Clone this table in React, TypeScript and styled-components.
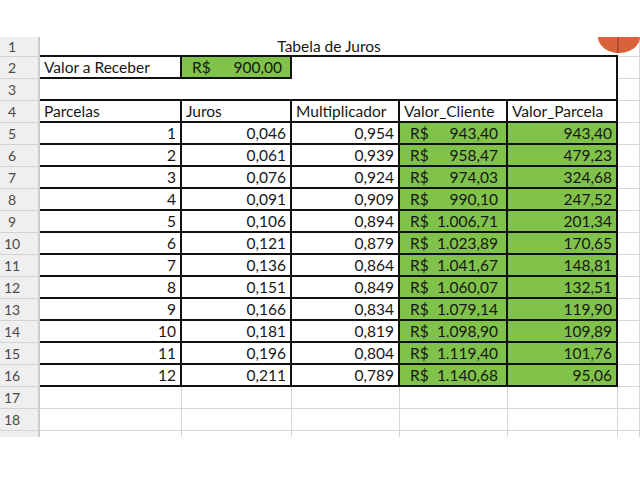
import React from "react";
import styled, { createGlobalStyle } from "styled-components";

const GlobalStyle = createGlobalStyle`
  html, body { margin: 0; padding: 0; background: #ffffff; }
  body { font-family: Lato, "Open Sans", "Liberation Sans", sans-serif; }
`;

type Line = "black" | "gray" | "none";

const lineCss = (l: Line | undefined) =>
  l === "black" ? "2px solid #111" : l === "none" ? "0 solid transparent" : "1px solid #d6d6d6";

const Page = styled.div`
  position: relative;
  width: 640px;
  height: 480px;
  overflow: hidden;
  padding-top: 37px;
  box-sizing: border-box;
`;

const Sheet = styled.div`
  display: grid;
  grid-template-columns: 40px 142px 110px 108px 108px 110px 22px;
  grid-template-rows: 20px repeat(17, 22px) 6px;
`;

const RowHead = styled.div<{ $last?: boolean }>`
  box-sizing: border-box;
  background: #efefef;
  border-right: 2px solid #cdcdcd;
  border-bottom: ${(p) => (p.$last ? "none" : "1px solid #d2d2d2")};
  color: #4a4a4a;
  font-size: 14px;
  line-height: 1;
  display: flex;
  align-items: center;
  padding-left: 4px;
  padding-top: 1px;
  width: 40px;
  span { display: inline-block; width: 16px; text-align: center; }
`;

const Cell = styled.div<{
  $span?: number;
  $r?: Line;
  $b?: Line;
  $fill?: boolean;
  $align?: "left" | "right" | "center" | "split";
}>`
  box-sizing: border-box;
  grid-column: span ${(p) => p.$span ?? 1};
  border-right: ${(p) => lineCss(p.$r)};
  border-bottom: ${(p) => lineCss(p.$b)};
  background: ${(p) => (p.$fill ? "#80c24a" : "#ffffff")};
  color: #171717;
  font-size: 15.5px;
  line-height: 1;
  display: flex;
  align-items: center;
  padding: 2px 4px 0 4px;
  white-space: nowrap;
  overflow: hidden;
  justify-content: ${(p) =>
    p.$align === "right"
      ? "flex-end"
      : p.$align === "center"
      ? "center"
      : p.$align === "split"
      ? "space-between"
      : "flex-start"};
`;

const Money = styled(Cell)`
  padding-left: 10px;
  padding-right: 8px;
`;

const Marker = styled.svg`
  position: absolute;
  left: 598px;
  top: 36px;
`;

const rows: [string, string, string, string, string][] = [
  ["1", "0,046", "0,954", "943,40", "943,40"],
  ["2", "0,061", "0,939", "958,47", "479,23"],
  ["3", "0,076", "0,924", "974,03", "324,68"],
  ["4", "0,091", "0,909", "990,10", "247,52"],
  ["5", "0,106", "0,894", "1.006,71", "201,34"],
  ["6", "0,121", "0,879", "1.023,89", "170,65"],
  ["7", "0,136", "0,864", "1.041,67", "148,81"],
  ["8", "0,151", "0,849", "1.060,07", "132,51"],
  ["9", "0,166", "0,834", "1.079,14", "119,90"],
  ["10", "0,181", "0,819", "1.098,90", "109,89"],
  ["11", "0,196", "0,804", "1.119,40", "101,76"],
  ["12", "0,211", "0,789", "1.140,68", "95,06"],
];

const Head = ({ n, last }: { n?: number; last?: boolean }) => (
  <RowHead $last={last}>
    <span>{n ?? ""}</span>
  </RowHead>
);

export default function App() {
  return (
    <Page>
      <GlobalStyle />
      <Sheet>
        {/* row 1 */}
        <Head n={1} />
        <Cell $span={5} $align="center" $r="none" $b="black">
          Tabela de Juros
        </Cell>
        <Cell />

        {/* row 2 */}
        <Head n={2} />
        <Cell $r="black" $b="black">Valor a Receber</Cell>
        <Money $fill $r="black" $b="black" $align="split">
          <span>R$</span>
          <span>900,00</span>
        </Money>
        <Cell $span={3} $r="black" $b="none" />
        <Cell />

        {/* row 3 */}
        <Head n={3} />
        <Cell $span={5} $r="black" $b="black" />
        <Cell />

        {/* row 4 */}
        <Head n={4} />
        <Cell $r="black" $b="black">Parcelas</Cell>
        <Cell $r="black" $b="black">Juros</Cell>
        <Cell $r="black" $b="black">Multiplicador</Cell>
        <Cell $r="black" $b="black">Valor_Cliente</Cell>
        <Cell $r="black" $b="black">Valor_Parcela</Cell>
        <Cell />

        {rows.map((r, i) => (
          <React.Fragment key={r[0]}>
            <Head n={i + 5} />
            <Cell $r="black" $b="black" $align="right">{r[0]}</Cell>
            <Cell $r="black" $b="black" $align="right">{r[1]}</Cell>
            <Cell $r="black" $b="black" $align="right">{r[2]}</Cell>
            <Money $fill $r="black" $b="black" $align="split">
              <span>R$</span>
              <span>{r[3]}</span>
            </Money>
            <Cell $fill $r="black" $b="black" $align="right">{r[4]}</Cell>
            <Cell />
          </React.Fragment>
        ))}

        {[17, 18].map((n) => (
          <React.Fragment key={n}>
            <Head n={n} />
            <Cell />
            <Cell />
            <Cell />
            <Cell />
            <Cell />
            <Cell />
          </React.Fragment>
        ))}

        <Head last />
        <Cell $b="none" />
        <Cell $b="none" />
        <Cell $b="none" />
        <Cell $b="none" />
        <Cell $b="none" />
        <Cell $b="none" />
      </Sheet>
      <Marker width="42" height="18" viewBox="0 0 42 18">
        <path d="M0 1 H42 A21 16 0 0 1 0 1 Z" fill="#d8623a" />
        <line x1="20" y1="1" x2="20" y2="17" stroke="#8a3a20" strokeWidth="1" />
      </Marker>
    </Page>
  );
}
